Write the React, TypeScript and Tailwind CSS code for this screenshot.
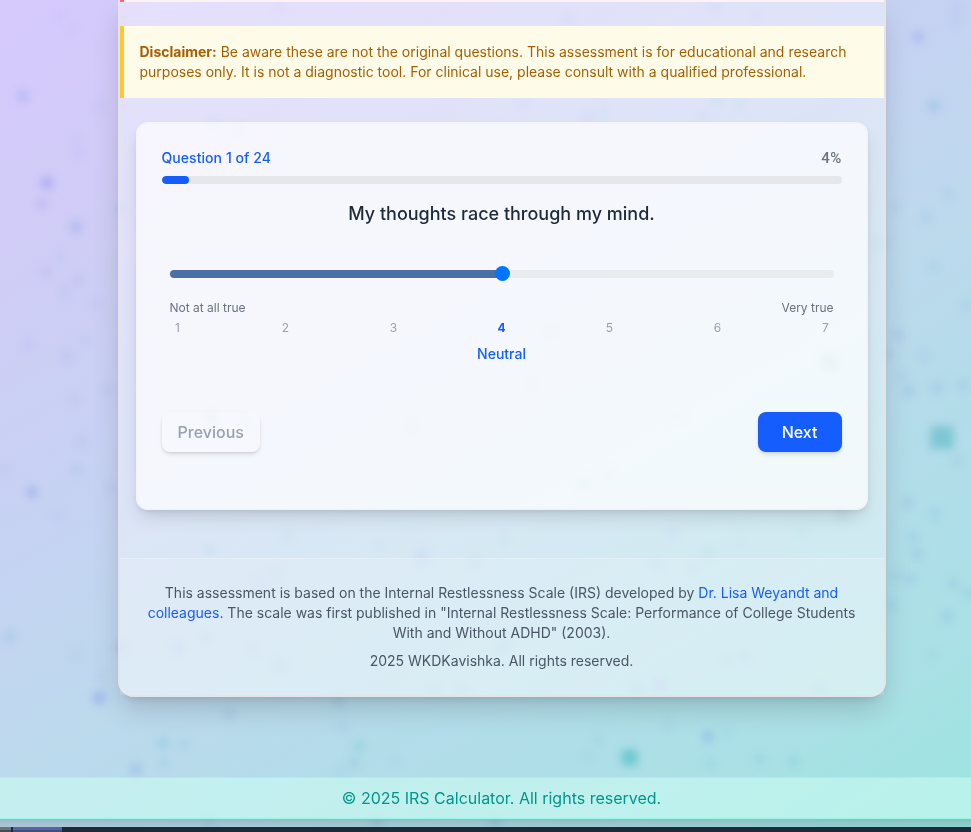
import React from "react";

type Particle = [x: number, y: number, r: number, color: string, opacity: number];

const PARTICLES: Particle[] = [
  [23, 96, 5, "#8b9fe8", 0.5],
  [60, 16, 4, "#bda9f2", 0.3],
  [72, 30, 4, "#c0a6f5", 0.3],
  [100, 107, 5, "#a9b0ee", 0.35],
  [77, 139, 5, "#bba6f2", 0.25],
  [79, 153, 4, "#9fb3ea", 0.4],
  [47, 183, 6, "#9290ee", 0.55],
  [42, 204, 4, "#a99bee", 0.5],
  [76, 227, 6, "#90aaea", 0.5],
  [119, 209, 5, "#7fc0d8", 0.35],
  [61, 256, 5, "#9fc0ec", 0.3],
  [46, 272, 5, "#9dabe8", 0.4],
  [78, 280, 5, "#9dabe8", 0.4],
  [65, 292, 5, "#a0b1e8", 0.35],
  [96, 303, 5, "#a8b5ec", 0.35],
  [28, 346, 5, "#a6b1ec", 0.35],
  [84, 340, 4, "#a6b5ec", 0.35],
  [67, 356, 6, "#a5afe9", 0.4],
  [107, 389, 5, "#95b3e2", 0.35],
  [75, 400, 5, "#a3b4e8", 0.3],
  [82, 443, 5, "#9db1e3", 0.35],
  [5, 470, 5, "#a8b8ea", 0.35],
  [77, 470, 5, "#94b2dd", 0.45],
  [32, 492, 5, "#8298e4", 0.55],
  [57, 515, 5, "#a5b6ea", 0.3],
  [113, 487, 5, "#9cb4e3", 0.4],
  [10, 637, 5, "#8dbde2", 0.5],
  [75, 655, 5, "#a4b6ee", 0.35],
  [99, 698, 6, "#7f95e4", 0.55],
  [101, 676, 5, "#9db2e8", 0.3],
  [119, 647, 5, "#829be0", 0.4],
  [179, 648, 6, "#93a1ec", 0.45],
  [206, 638, 5, "#93b1eb", 0.35],
  [252, 649, 5, "#92a8e8", 0.3],
  [280, 666, 5, "#8ca3e6", 0.4],
  [229, 714, 5, "#8aa3db", 0.4],
  [163, 743, 5, "#7cbddd", 0.5],
  [184, 745, 5, "#86b5dc", 0.35],
  [136, 769, 5, "#849fe0", 0.5],
  [164, 763, 5, "#74c0dc", 0.35],
  [210, 822, 5, "#83a3dc", 0.3],
  [339, 702, 5, "#83a1db", 0.4],
  [342, 727, 5, "#87abe0", 0.3],
  [359, 746, 6, "#68bed0", 0.45],
  [354, 763, 5, "#83addf", 0.45],
  [341, 771, 4, "#82b5e0", 0.35],
  [396, 762, 4, "#83b8df", 0.25],
  [598, 739, 5, "#83b8df", 0.3],
  [587, 755, 4, "#75bcd2", 0.3],
  [660, 685, 6, "#b0a8e9", 0.5],
  [708, 737, 5, "#7a9ce5", 0.5],
  [668, 725, 4, "#77bbd2", 0.3],
  [727, 732, 4, "#77bbd2", 0.3],
  [760, 759, 5, "#7bb7db", 0.45],
  [794, 762, 5, "#68bbc7", 0.45],
  [710, 763, 5, "#68bbc7", 0.3],
  [820, 689, 5, "#78bcd1", 0.35],
  [918, 37, 5, "#939ef0", 0.55],
  [955, 21, 5, "#a5b5ea", 0.35],
  [957, 8, 5, "#a5b5ea", 0.35],
  [934, 106, 6, "#8bb9e0", 0.5],
  [948, 194, 5, "#8dbadf", 0.4],
  [926, 218, 6, "#8bbddf", 0.35],
  [895, 207, 5, "#8dbadf", 0.3],
  [880, 245, 8, "#85c2da", 0.35],
  [934, 267, 5, "#78bcdb", 0.35],
  [966, 306, 5, "#7eb7df", 0.4],
  [898, 335, 5, "#829fdf", 0.45],
  [924, 356, 5, "#88a9e4", 0.35],
  [889, 354, 5, "#8cabdf", 0.35],
  [902, 376, 5, "#8aa7de", 0.3],
  [909, 391, 6, "#85a5dc", 0.45],
  [937, 388, 6, "#82a8df", 0.4],
  [963, 385, 5, "#82a8df", 0.45],
  [957, 461, 5, "#80add9", 0.35],
  [908, 503, 5, "#7d9edb", 0.45],
  [935, 514, 6, "#7cbcda", 0.4],
  [913, 537, 5, "#7da6df", 0.4],
  [917, 554, 5, "#7ca0dc", 0.45],
  [896, 576, 5, "#71bed0", 0.4],
  [910, 579, 5, "#7caae2", 0.45],
  [953, 584, 5, "#78addb", 0.45],
  [968, 593, 5, "#79b2df", 0.45],
  [947, 617, 5, "#6dabda", 0.45],
  [892, 605, 5, "#73bad5", 0.4],
  [933, 655, 4, "#72bed0", 0.3],
  [587, 118, 5, "#9f9ced", 0.45],
  [603, 112, 6, "#7bcadb", 0.35],
  [717, 101, 5, "#7cc6d9", 0.45],
  [739, 106, 5, "#7cc6d9", 0.35],
  [703, 116, 5, "#a09cea", 0.35],
  [567, 19, 5, "#a09cea", 0.4],
  [715, 7, 5, "#91afe8", 0.35],
  [756, 16, 5, "#91afe8", 0.25],
  [280, 8, 6, "#a9aff0", 0.3],
  [523, 104, 5, "#9ca8ed", 0.3],
  [214, 124, 6, "#8fb4e5", 0.4],
  [238, 131, 7, "#8dafd7", 0.4],
  [211, 417, 7, "#7ea6c6", 0.5],
  [245, 417, 6, "#8aaed0", 0.4],
  [830, 362, 9, "#6fa3b0", 0.5],
  [678, 416, 6, "#7fbdcd", 0.4],
  [551, 331, 7, "#8bb2cf", 0.4],
  [412, 427, 7, "#8bb2cf", 0.35],
  [533, 385, 6, "#7fb2cb", 0.4],
  [584, 484, 8, "#79b8c8", 0.4],
  [608, 474, 6, "#79b8c8", 0.4],
  [646, 498, 7, "#7ed4e0", 0.4],
  [842, 515, 6, "#7a9bcd", 0.4],
  [672, 532, 5, "#88a9df", 0.35],
  [801, 533, 5, "#73c0d3", 0.4],
  [740, 541, 6, "#8ebbe0", 0.25],
  [709, 554, 5, "#72bdca", 0.4],
  [422, 556, 6, "#7e9ee1", 0.45],
  [504, 540, 5, "#7fbbd8", 0.3],
  [380, 546, 5, "#93b7de", 0.3],
  [287, 537, 6, "#85bbdb", 0.35],
  [210, 550, 6, "#85b7dd", 0.4],
  [475, 563, 6, "#87b4dc", 0.35],
  [693, 569, 5, "#9aa4df", 0.35],
  [657, 564, 5, "#8aaee3", 0.3],
  [260, 582, 6, "#97afe5", 0.35],
  [276, 574, 6, "#8dbcde", 0.35],
  [502, 646, 5, "#96a9e0", 0.35],
  [745, 657, 6, "#8eace0", 0.35],
  [726, 661, 5, "#8ab0cd", 0.35],
  [462, 690, 5, "#86b8d2", 0.3],
  [433, 689, 5, "#86b8d2", 0.3],
  [637, 689, 6, "#8aaede", 0.35],
  [495, 823, 5, "#7392c9", 0.4],
  [377, 823, 5, "#7392c9", 0.4],
];

// Bright particles keep most of their strength; dim ones recede into the gradient.
const fade = (opacity: number) => (opacity >= 0.5 ? opacity * 0.9 : opacity * 0.6);

function Backdrop() {
  return (
    <svg className="absolute inset-0 h-full w-full" viewBox="0 0 971 832" aria-hidden="true">
      <defs>
        <filter id="soft" x="-20%" y="-20%" width="140%" height="140%" colorInterpolationFilters="sRGB">
          <feGaussianBlur stdDeviation="4" />
        </filter>
      </defs>
      <g filter="url(#soft)">
        {PARTICLES.map(([x, y, r, color, opacity], i) => (
          <circle key={i} cx={x} cy={y} r={r + 0.5} fill={color} opacity={fade(opacity)} />
        ))}
        <rect x="930.5" y="426" width="23" height="23" fill="#5bb8c7" opacity="0.6" />
        <rect x="621.5" y="749.5" width="16" height="16" fill="#4bbdc2" opacity="0.66" />
      </g>
    </svg>
  );
}

const SCALE = [1, 2, 3, 4, 5, 6, 7];

function QuestionCard() {
  const selected = 4;
  const progress = 4;
  return (
    <section className="mx-4 mt-6 h-[388px] rounded-xl border-2 border-[#f0f2f4]/60 bg-white/70 p-6 shadow-[0_10px_18px_-3px_rgba(0,0,0,0.13),0_3px_6px_-2px_rgba(0,0,0,0.1)]">
      <div className="flex h-5 justify-between text-sm font-medium">
        <span className="tracking-[0.06px] text-[#155dfc]">Question 1 of 24</span>
        <span className="font-['Roboto',sans-serif] text-[15px] leading-5 tracking-[0.3px] text-[#6a7282]">{progress}%</span>
      </div>
      <div className="mt-2 h-2 overflow-hidden rounded-full bg-[#e5e7eb]">
        <div className="h-full rounded-full bg-[#155dfc]" style={{ width: `${progress}%` }} />
      </div>
      <h2 className="mt-4 text-center text-lg font-medium text-[#1e2939]">
        My thoughts race through my mind.
      </h2>
      <div className="mt-[38px] px-2">
        <div className="flex h-[15px] items-end">
          <div className="mb-[3px] h-2 flex-1 rounded-l-full bg-[#4a6fa5]" />
          <div className="z-10 -mr-[8px] -ml-[7px] size-[15px] rounded-full bg-[#0075ff]" />
          <div className="mb-[3px] h-2 flex-1 rounded-r-full bg-[#e8ecef]" />
        </div>
        <div className="mt-[19px] flex justify-between text-xs text-[#6a7282]">
          <span>Not at all true</span>
          <span>Very true</span>
        </div>
        <div className="mt-1 flex justify-between text-xs text-[#99a1af]">
          {SCALE.map((n) => (
            <span key={n} className={n === selected ? "w-4 text-center font-bold text-[#155dfc]" : "w-4 text-center"}>
              {n}
            </span>
          ))}
        </div>
        <p className="mt-2 text-center text-sm font-medium text-[#155dfc]">Neutral</p>
      </div>
      <div className="mt-12 flex justify-between">
        <button className="h-10 rounded-lg bg-white/10 px-4 font-medium text-[#99a1af] shadow-[0_3px_5px_-1px_rgba(0,0,0,0.13),0_1px_3px_-1px_rgba(0,0,0,0.12)]">
          Previous
        </button>
        <button className="h-10 rounded-lg bg-[#155dfc] px-6 font-medium text-white shadow-[0_3px_5px_-1px_rgba(0,0,0,0.13),0_1px_3px_-1px_rgba(0,0,0,0.12)]">
          Next
        </button>
      </div>
    </section>
  );
}

export default function App() {
  return (
    <div className="relative h-[832px] w-full overflow-hidden bg-[linear-gradient(150deg,#d6c9fd_0%,#cfcdf6_21%,#c5d3f2_41%,#bdd9ed_55%,#b4dcea_68%,#abe0e6_85%,#9ae5e0_100%)] font-['Inter',sans-serif]">
      <Backdrop />
      <div className="relative flex w-[1003px] flex-col">
        <main className="mx-auto h-[697px] w-[768px] rounded-b-2xl border-x-2 border-b-2 border-[#e5e5e9] bg-white/40 shadow-[0_14px_28px_-3px_rgba(0,0,0,0.17),0_6px_10px_-5px_rgba(0,0,0,0.12)]">
          <div className="h-0.5 border-l-4 border-[#ff6467] bg-[#fef2f2]" />
          <div className="mt-6 border-l-4 border-[#ffc831] bg-[#fefce8] p-4 text-sm text-[#a65f00]">
            <strong className="font-bold">Disclaimer:</strong> Be aware these are not the original questions. This
            assessment is for educational and research purposes only. It is not a diagnostic tool. For clinical use,
            please consult with a qualified professional.
          </div>
          <QuestionCard />
          <footer className="mt-12 border-t border-white/20 bg-white/15 p-6 text-center text-sm text-[#4a5565]">
            <p>
              This assessment is based on the Internal Restlessness Scale (IRS) developed by{" "}
              <a className="text-[#155dfc]">Dr. Lisa Weyandt and colleagues</a>. The scale was first published in
              "Internal Restlessness Scale: Performance of College Students With and Without ADHD" (2003).
            </p>
            <p className="mt-2">2025 WKDKavishka. All rights reserved.</p>
          </footer>
        </main>
        <div className="mt-20 border-y border-[#96f7e4] bg-[#cbfbf1]/60 py-2 text-center text-base text-[#009689]">
          © 2025 IRS Calculator. All rights reserved.
        </div>
        <div className="h-2 bg-gradient-to-b from-black/15 to-black/8" />
        <div className="flex h-[5px] gap-0.5 bg-[#1e2939]">
          <div className="h-full w-[11px] border-t-[3px] border-[#6d7279] bg-[#454b56]" />
          <div className="h-full w-[49px] border-t-[3px] border-[#5664a5] bg-[#434d7a]" />
        </div>
      </div>
    </div>
  );
}
